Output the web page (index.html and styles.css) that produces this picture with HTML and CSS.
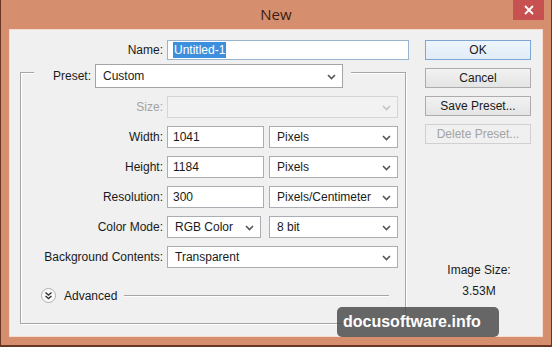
FILE: index.html
```html
<!DOCTYPE html>
<html lang="en">

<head>
    <meta charset="UTF-8">
    <title>New</title>
    <link rel="stylesheet" href="styles.css">
</head>

<body>
    <div class="window">
        <div class="titlebar">
            <span class="title">New</span>
            <button class="close-button">
                <svg width="10" height="10" viewBox="0 0 10 10"><path d="M1 1L9 9M9 1L1 9" stroke="#ffffff" stroke-width="1.8"/></svg>
            </button>
        </div>

        <div class="client">
            <div class="main">
                <div class="name-row">
                    <label class="name-label">Name:</label>
                    <div class="field name-field"><span class="selected">Untitled-1</span></div>
                </div>

                <div class="group">
                    <div class="preset-row">
                        <label class="preset-label">Preset:</label>
                        <div class="select preset-select">Custom
                            <svg class="arrow" width="9" height="6" viewBox="0 0 9 6"><path d="M1 1L4.5 4.5L8 1" fill="none" stroke="#555" stroke-width="1.6"/></svg>
                        </div>
                    </div>

                    <div class="rows">
                        <div class="row">
                            <label class="row-label disabled">Size:</label>
                            <div class="select wide disabled-select">
                                <svg class="arrow" width="9" height="6" viewBox="0 0 9 6"><path d="M1 1L4.5 4.5L8 1" fill="none" stroke="#c4c4c4" stroke-width="1.6"/></svg>
                            </div>
                        </div>
                        <div class="row">
                            <label class="row-label">Width:</label>
                            <div class="field number">1041</div>
                            <div class="select unit">Pixels
                                <svg class="arrow" width="9" height="6" viewBox="0 0 9 6"><path d="M1 1L4.5 4.5L8 1" fill="none" stroke="#555" stroke-width="1.6"/></svg>
                            </div>
                        </div>
                        <div class="row">
                            <label class="row-label">Height:</label>
                            <div class="field number">1184</div>
                            <div class="select unit">Pixels
                                <svg class="arrow" width="9" height="6" viewBox="0 0 9 6"><path d="M1 1L4.5 4.5L8 1" fill="none" stroke="#555" stroke-width="1.6"/></svg>
                            </div>
                        </div>
                        <div class="row">
                            <label class="row-label">Resolution:</label>
                            <div class="field number">300</div>
                            <div class="select unit">Pixels/Centimeter
                                <svg class="arrow" width="9" height="6" viewBox="0 0 9 6"><path d="M1 1L4.5 4.5L8 1" fill="none" stroke="#555" stroke-width="1.6"/></svg>
                            </div>
                        </div>
                        <div class="row">
                            <label class="row-label">Color Mode:</label>
                            <div class="select mode">RGB Color
                                <svg class="arrow" width="9" height="6" viewBox="0 0 9 6"><path d="M1 1L4.5 4.5L8 1" fill="none" stroke="#555" stroke-width="1.6"/></svg>
                            </div>
                            <div class="select unit bits">8 bit
                                <svg class="arrow" width="9" height="6" viewBox="0 0 9 6"><path d="M1 1L4.5 4.5L8 1" fill="none" stroke="#555" stroke-width="1.6"/></svg>
                            </div>
                        </div>
                        <div class="row">
                            <label class="row-label">Background Contents:</label>
                            <div class="select wide">Transparent
                                <svg class="arrow" width="9" height="6" viewBox="0 0 9 6"><path d="M1 1L4.5 4.5L8 1" fill="none" stroke="#555" stroke-width="1.6"/></svg>
                            </div>
                        </div>
                    </div>

                    <div class="advanced">
                        <span class="advanced-toggle">
                            <svg width="9" height="9" viewBox="0 0 9 9"><path d="M1.5 1.5L4.5 4L7.5 1.5M1.5 5L4.5 7.5L7.5 5" fill="none" stroke="#333" stroke-width="1.4"/></svg>
                        </span>
                        <span class="advanced-text">Advanced</span>
                        <span class="advanced-line"></span>
                    </div>
                </div>
            </div>

            <div class="side">
                <button class="button default">OK</button>
                <button class="button">Cancel</button>
                <button class="button">Save Preset...</button>
                <button class="button" disabled>Delete Preset...</button>
                <div class="image-size">
                    <div class="image-size-label">Image Size:</div>
                    <div class="image-size-value">3.53M</div>
                </div>
            </div>
        </div>

        <div class="watermark">docusoftware.info</div>
    </div>
</body>

</html>
```

FILE: styles.css
```css
body {
    margin: 0;
    font-family: 'Liberation Sans', Arial, sans-serif;
    font-size: 12px;
    color: #1a1a1a;
}

.window {
    position: relative;
    width: 552px;
    height: 347px;
    box-sizing: border-box;
    background-color: #d58f6f;
    border-left: 1px solid #6a3624;
    border-right: 1px solid #6a3624;
    border-bottom: 2px solid #6a3624;
}

.titlebar {
    height: 29px;
    display: grid;
    grid-template-columns: 1fr auto 1fr;
    align-items: start;
}

.title {
    grid-column: 2;
    font-family: 'Open Sans', sans-serif;
    font-size: 15px;
    color: #3a1b0f;
    line-height: 29px;
}

.close-button {
    grid-column: 3;
    justify-self: end;
    width: 31px;
    height: 20px;
    margin-right: 7px;
    padding: 0;
    border: none;
    background-color: #c75050;
    display: flex;
    align-items: center;
    justify-content: center;
}

.client {
    margin: 0 8px;
    height: 308px;
    box-sizing: border-box;
    border: 1px solid #f7ddd0;
    background-color: #f0f0f0;
    display: flex;
}

.main {
    width: 400px;
}

.name-row {
    display: flex;
    align-items: center;
    gap: 4px;
    margin-top: 10px;
}

.name-label {
    width: 153px;
    text-align: right;
}

.field,
.select {
    box-sizing: border-box;
    height: 22px;
    background-color: #ffffff;
    border: 1px solid #abadb3;
    display: flex;
    align-items: center;
    padding-left: 5px;
}

.name-field {
    width: 242px;
    height: 20px;
    border-color: #9ab4cf;
    padding-left: 5px;
}

.selected {
    background-color: #3c8fdc;
    color: #ffffff;
    padding: 1px 1px;
    line-height: 14px;
}

.select {
    position: relative;
    padding-left: 7px;
}

.select .arrow {
    position: absolute;
    right: 6px;
    top: 8px;
}

.group {
    margin: 12px 0 0 10px;
    width: 386px;
    box-sizing: border-box;
    border: 1px solid #a6a6a6;
    box-shadow: 1px 1px 0 #ffffff, inset 1px 1px 0 #ffffff;
    padding-bottom: 20px;
}

.preset-row {
    display: flex;
    width: fit-content;
    align-items: center;
    gap: 4px;
    margin: -9px 0 0 13px;
    padding-right: 8px;
    background-color: #f0f0f0;
}

.preset-label {
    width: 57px;
    text-align: right;
}

.preset-select {
    width: 248px;
    height: 24px;
    border-color: #a5a5a5;
}

.preset-select .arrow {
    top: 9px;
}

.rows {
    display: flex;
    flex-direction: column;
    gap: 8px;
    margin-top: 8px;
}

.row {
    display: flex;
    align-items: center;
}

.row-label {
    width: 142px;
    margin-right: 4px;
    text-align: right;
}

.row-label.disabled {
    color: #a3a3a3;
}

.wide {
    width: 231px;
}

.disabled-select {
    background-color: #f2f2f2;
    border-color: #d5d5d5;
}

.number {
    width: 97px;
    margin-right: 5px;
}

.unit {
    width: 129px;
}

.mode {
    width: 94px;
    margin-right: 8px;
}

.advanced {
    display: flex;
    align-items: center;
    margin: 20px 16px 0 20px;
    height: 15px;
}

.advanced-toggle {
    width: 13px;
    height: 13px;
    border: 1px solid #b0b0b0;
    border-radius: 50%;
    background-color: #fafafa;
    display: flex;
    align-items: center;
    justify-content: center;
}

.advanced-text {
    margin-left: 8px;
}

.advanced-line {
    flex: 1;
    margin-left: 7px;
    height: 1px;
    background-color: #a6a6a6;
    box-shadow: 0 1px 0 #ffffff;
}

.side {
    margin-left: 15px;
    width: 106px;
    display: flex;
    flex-direction: column;
    gap: 8px;
    padding-top: 10px;
}

.button {
    height: 20px;
    padding: 0;
    font-family: inherit;
    font-size: 12px;
    color: #1a1a1a;
    border: 1px solid #acacac;
    background: linear-gradient(#f2f2f2, #e4e4e4);
}

.button.default {
    border-color: #7aa7d6;
    background: linear-gradient(#eef5fc, #e1ecf7);
}

.button:disabled {
    color: #a3a3a3;
    border-color: #d0d0d0;
    background: #f0f0f0;
}

.image-size {
    margin-top: 111px;
    text-align: center;
    padding-left: 2px;
}

.image-size-value {
    margin-top: 7px;
}

.watermark {
    position: absolute;
    left: 336px;
    top: 307px;
    width: 162px;
    height: 30px;
    box-sizing: border-box;
    padding-left: 6px;
    border-radius: 5px;
    background-color: rgba(78, 78, 78, 0.85);
    color: #ffffff;
    font-weight: bold;
    font-size: 16px;
    line-height: 30px;
}
```
